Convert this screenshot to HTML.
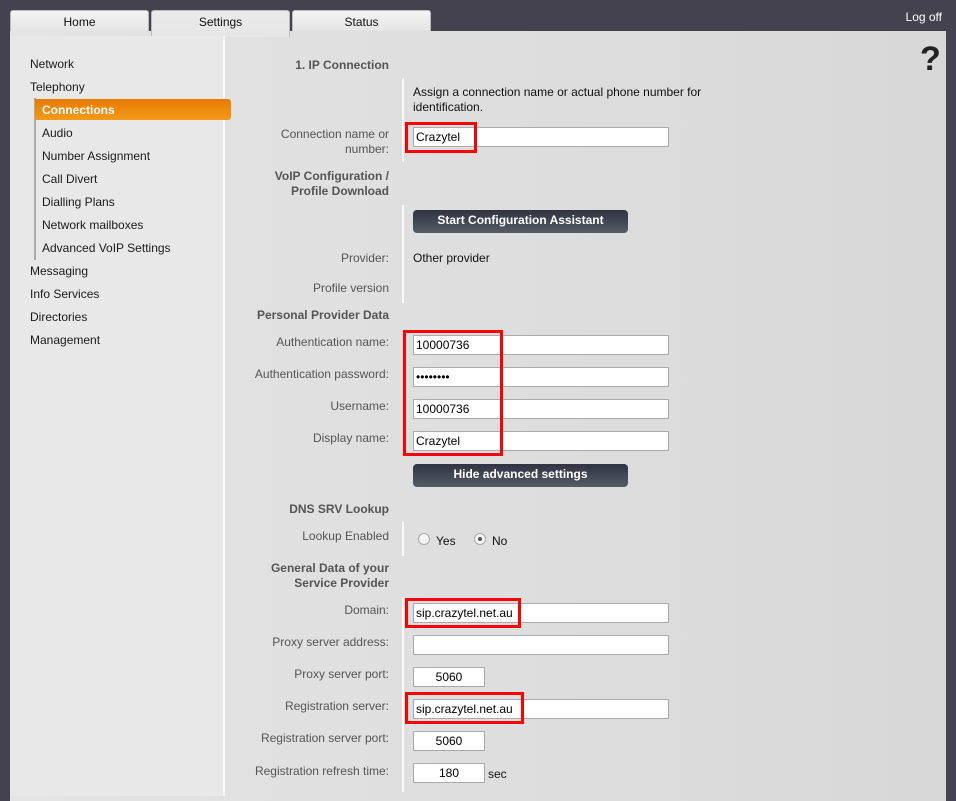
<!DOCTYPE html>
<html><head><meta charset="utf-8"><style>
*{margin:0;padding:0;box-sizing:border-box}
body{width:956px;height:792px;background:#44424f;font-family:"Liberation Sans",Arial,sans-serif;font-size:12px;position:relative;overflow:hidden}
.a{position:absolute}
.tab{position:absolute;top:10px;height:21px;background:linear-gradient(#f4f4f4,#e4e4e4);border:1px solid #bbb;border-bottom:none;border-radius:3px 3px 0 0;text-align:center;line-height:22px;color:#111}
#panel{position:absolute;left:10px;top:31px;width:936px;height:770px;background:linear-gradient(90deg,#e4e4e4,#d8d8d8)}
#side{position:absolute;left:10px;top:36px;width:215px;height:760px;background:#e8e8e8;border-right:2px solid #fafafa}
.nav{position:absolute;color:#1a1a1a;font-size:12px;margin-top:1px}
.lbl{position:absolute;right:567px;text-align:right;color:#555;font-size:12px;line-height:15px;margin-top:1px}
.hd{font-weight:bold}
.in{position:absolute;left:413px;width:256px;height:20px;background:#fff;border:1px solid #aaa;padding-left:2px;line-height:18px;color:#000}
.sm{width:72px;text-align:center;padding:0}
.red{position:absolute;border:3px solid #f00}
.btn{position:absolute;left:413px;width:215px;height:23px;border-radius:4px;background:linear-gradient(#2e3440,#565c66);color:#fff;font-weight:bold;text-align:center;line-height:21px}
.vl{position:absolute;left:402px;width:2px;background:#fafafa}
.rad{position:absolute;width:12px;height:12px;border-radius:50%;border:1px solid #aaa;background:#f4f4f4}
</style></head><body>
<div id="panel"></div>
<div class="tab" style="left:10px;width:139px">Home</div>
<div class="tab" style="left:151px;width:139px;height:27px;background:linear-gradient(#eaeaea,#e6e6e6)">Settings</div>
<div class="tab" style="left:292px;width:139px">Status</div>
<div class="a" style="right:14px;top:10px;color:#fff">Log off</div>
<div class="a" style="left:920px;top:40px;font-size:34px;font-weight:bold;color:#222">?</div>
<div id="side"></div>
<div class="nav" style="left:30px;top:56px">Network</div>
<div class="nav" style="left:30px;top:79px">Telephony</div>
<div class="a" style="left:34px;top:98px;width:2px;height:162px;background:#aaa"></div>
<div class="a" style="left:35px;top:99px;width:196px;height:21px;background:linear-gradient(#e87a00,#f39a1a);border-radius:0 3px 3px 0;color:#fff;font-weight:bold;padding-left:7px;line-height:22px">Connections</div>
<div class="nav" style="left:42px;top:125px">Audio</div>
<div class="nav" style="left:42px;top:148px">Number Assignment</div>
<div class="nav" style="left:42px;top:171px">Call Divert</div>
<div class="nav" style="left:42px;top:194px">Dialling Plans</div>
<div class="nav" style="left:42px;top:217px">Network mailboxes</div>
<div class="nav" style="left:42px;top:240px">Advanced VoIP Settings</div>
<div class="nav" style="left:30px;top:263px">Messaging</div>
<div class="nav" style="left:30px;top:286px">Info Services</div>
<div class="nav" style="left:30px;top:309px">Directories</div>
<div class="nav" style="left:30px;top:332px">Management</div>

<div class="vl" style="top:78px;height:84px"></div>
<div class="vl" style="top:205px;height:98px"></div>
<div class="vl" style="top:522px;height:34px"></div>
<div class="vl" style="top:598px;height:194px"></div>

<div class="lbl hd" style="top:57px">1. IP Connection</div>
<div class="a" style="left:413px;top:85px;color:#111;line-height:15px">Assign a connection name or actual phone number for<br>identification.</div>
<div class="lbl" style="top:126px">Connection name or<br>number:</div>
<div class="in" style="top:127px">Crazytel</div>
<div class="red" style="left:405px;top:122px;width:72px;height:31px"></div>
<div class="lbl hd" style="top:168px">VoIP Configuration /<br>Profile Download</div>
<div class="btn" style="top:210px">Start Configuration Assistant</div>
<div class="lbl" style="top:250px">Provider:</div>
<div class="a" style="left:413px;top:251px;color:#111">Other provider</div>
<div class="lbl" style="top:280px">Profile version</div>
<div class="lbl hd" style="top:307px">Personal Provider Data</div>
<div class="lbl" style="top:334px">Authentication name:</div>
<div class="in" style="top:335px">10000736</div>
<div class="lbl" style="top:366px">Authentication password:</div>
<div class="in" style="top:367px">••••••••</div>
<div class="lbl" style="top:398px">Username:</div>
<div class="in" style="top:399px">10000736</div>
<div class="lbl" style="top:430px">Display name:</div>
<div class="in" style="top:431px">Crazytel</div>
<div class="red" style="left:403px;top:330px;width:100px;height:126px"></div>
<div class="btn" style="top:464px">Hide advanced settings</div>
<div class="lbl hd" style="top:501px">DNS SRV Lookup</div>
<div class="lbl" style="top:528px">Lookup Enabled</div>
<div class="rad" style="left:418px;top:533px"></div>
<div class="a" style="left:436px;top:534px;color:#111">Yes</div>
<div class="rad" style="left:474px;top:533px"><div class="a" style="left:3px;top:3px;width:4px;height:4px;border-radius:50%;background:#555"></div></div>
<div class="a" style="left:492px;top:534px;color:#111">No</div>
<div class="lbl hd" style="top:560px">General Data of your<br>Service Provider</div>
<div class="lbl" style="top:602px">Domain:</div>
<div class="in" style="top:603px">sip.crazytel.net.au</div>
<div class="red" style="left:405px;top:598px;width:116px;height:30px"></div>
<div class="lbl" style="top:634px">Proxy server address:</div>
<div class="in" style="top:635px"></div>
<div class="lbl" style="top:666px">Proxy server port:</div>
<div class="in sm" style="top:667px">5060</div>
<div class="lbl" style="top:698px">Registration server:</div>
<div class="in" style="top:699px">sip.crazytel.net.au</div>
<div class="red" style="left:405px;top:692px;width:119px;height:32px"></div>
<div class="lbl" style="top:730px">Registration server port:</div>
<div class="in sm" style="top:731px">5060</div>
<div class="lbl" style="top:763px">Registration refresh time:</div>
<div class="in sm" style="top:763px">180</div>
<div class="a" style="left:488px;top:767px;color:#111">sec</div>
</body></html>
